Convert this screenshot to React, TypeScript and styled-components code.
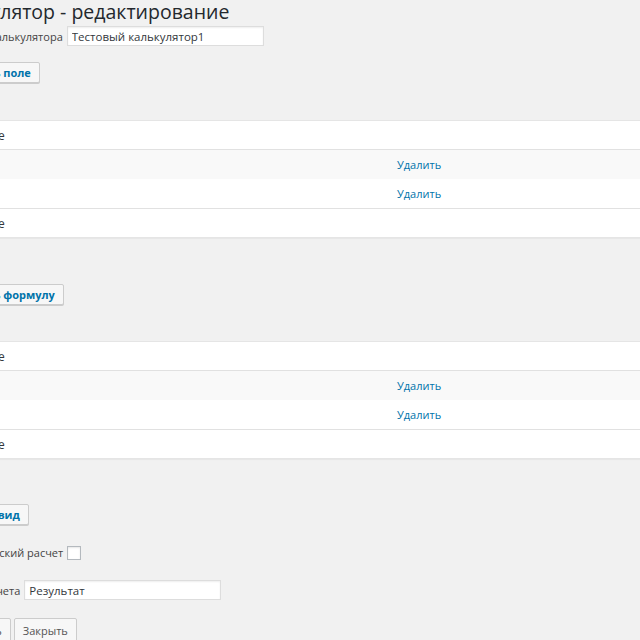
import styled, { createGlobalStyle } from 'styled-components';

const GlobalStyle = createGlobalStyle`
  html, body {
    margin: 0;
    padding: 0;
    background: #f1f1f1;
    overflow: hidden;
  }
  body {
    font-family: "Open Sans", "Noto Sans", sans-serif;
    font-size: 11px;
    color: #444;
  }
`;

type Row = { name: string; link?: boolean };

const fields: Row[] = [{ name: 'Цена' }, { name: 'Кол-во' }];
const formulas: Row[] = [{ name: 'Итог' }, { name: 'Формула', link: true }];

const App = () => {
  return (
    <>
      <GlobalStyle />
      <Page>
        <Title>Калькулятор - редактирование</Title>
        <FieldRow>
          <Label>Название калькулятора</Label>
          <TextInput defaultValue="Тестовый калькулятор1" />
        </FieldRow>

        <Button $top={16} $bottom={37}>Добавить поле</Button>
        <ListTable rows={fields} />

        <Button $top={46} $bottom={36}>Добавить формулу</Button>
        <ListTable rows={formulas} />

        <Button $top={45}>Сменить вид</Button>

        <FieldRow $top={20}>
          <Label>Автоматический расчет</Label>
          <Checkbox type="checkbox" />
        </FieldRow>

        <FieldRow $top={20}>
          <Label>Подпись отчета</Label>
          <TextInput defaultValue="Результат" />
        </FieldRow>

        <Actions>
          <PlainButton>Сохранить</PlainButton>
          <PlainButton>Закрыть</PlainButton>
        </Actions>
      </Page>
    </>
  );
};

const ListTable = ({ rows }: { rows: Row[] }) => (
  <Table>
    <thead>
      <HeadRow>
        <HeadCell>Название</HeadCell>
        <HeadCell />
      </HeadRow>
    </thead>
    <tbody>
      {rows.map((r, i) => (
        <BodyRow key={r.name} $striped={i % 2 === 0}>
          <Cell>{r.link ? <Link href="#">{r.name}</Link> : r.name}</Cell>
          <Cell>
            <Link href="#">Удалить</Link>
          </Cell>
        </BodyRow>
      ))}
    </tbody>
    <tfoot>
      <FootRow>
        <HeadCell>Название</HeadCell>
        <HeadCell />
      </FootRow>
    </tfoot>
  </Table>
);

export default App;

const Page = styled.div`
  display: flex;
  flex-direction: column;
  align-items: flex-start;
  margin-left: -65px;
  margin-top: -2px;
`;

const Title = styled.h1`
  margin: 0;
  font-size: 19.5px;
  line-height: 28px;
  font-weight: 400;
  color: #23282d;
`;

const FieldRow = styled.div<{ $top?: number }>`
  display: flex;
  align-items: center;
  gap: 4px;
  margin-top: ${p => p.$top ?? 0}px;
`;

const Label = styled.label`
  font-size: 11px;
  color: #444;
`;

const TextInput = styled.input`
  box-sizing: border-box;
  width: 197px;
  height: 20px;
  padding: 0 4px;
  border: 1px solid #ddd;
  box-shadow: inset 0 1px 2px rgba(0, 0, 0, 0.07);
  background: #fff;
  font-family: inherit;
  font-size: 11.5px;
  color: #32373c;
  outline: none;
`;

const Checkbox = styled.input`
  appearance: none;
  box-sizing: border-box;
  width: 14px;
  height: 14px;
  margin: 0;
  border: 1px solid #b4b9be;
  background: #fff;
  box-shadow: inset 0 1px 2px rgba(0, 0, 0, 0.1);
`;

const Button = styled.button<{ $top: number; $bottom?: number }>`
  box-sizing: border-box;
  height: 21px;
  margin-top: ${p => p.$top}px;
  margin-bottom: ${p => p.$bottom ?? 0}px;
  padding: 0 8px;
  border: 1px solid #ccc;
  border-radius: 2px;
  background: #f7f7f7;
  box-shadow: 0 1px 0 #ccc;
  font-family: inherit;
  font-size: 11px;
  font-weight: 700;
  color: #0073aa;
`;

const Table = styled.table`
  width: 1000px;
  border-collapse: collapse;
  border: 1px solid #e5e5e5;
  background: #fff;
  box-shadow: 0 1px 1px rgba(0, 0, 0, 0.04);
  font-size: 11px;
  color: #32373c;
`;

const Cell = styled.td`
  height: 29px;
  padding: 0 10px;
  &:first-child {
    width: 429px;
  }
`;

const HeadCell = styled.th`
  height: 28px;
  padding: 0 10px;
  text-align: left;
  font-size: 12px;
  font-weight: 400;
  color: #32373c;
  &:first-child {
    width: 429px;
    padding-left: 12px;
  }
`;

const HeadRow = styled.tr`
  border-bottom: 1px solid #e1e1e1;
`;

const FootRow = styled.tr`
  border-top: 1px solid #e1e1e1;
`;

const BodyRow = styled.tr<{ $striped: boolean }>`
  background: ${p => (p.$striped ? '#f9f9f9' : '#fff')};
`;

const Link = styled.a`
  color: #0073aa;
  text-decoration: none;
`;

const Actions = styled.div`
  display: flex;
  gap: 3px;
  margin-top: 18px;
`;

const PlainButton = styled.button`
  box-sizing: border-box;
  height: 24px;
  padding: 0 8px;
  border: 1px solid #ccc;
  border-radius: 2px;
  background: #f7f7f7;
  box-shadow: 0 1px 0 #ccc;
  font-family: inherit;
  font-size: 11px;
  color: #555;
`;
